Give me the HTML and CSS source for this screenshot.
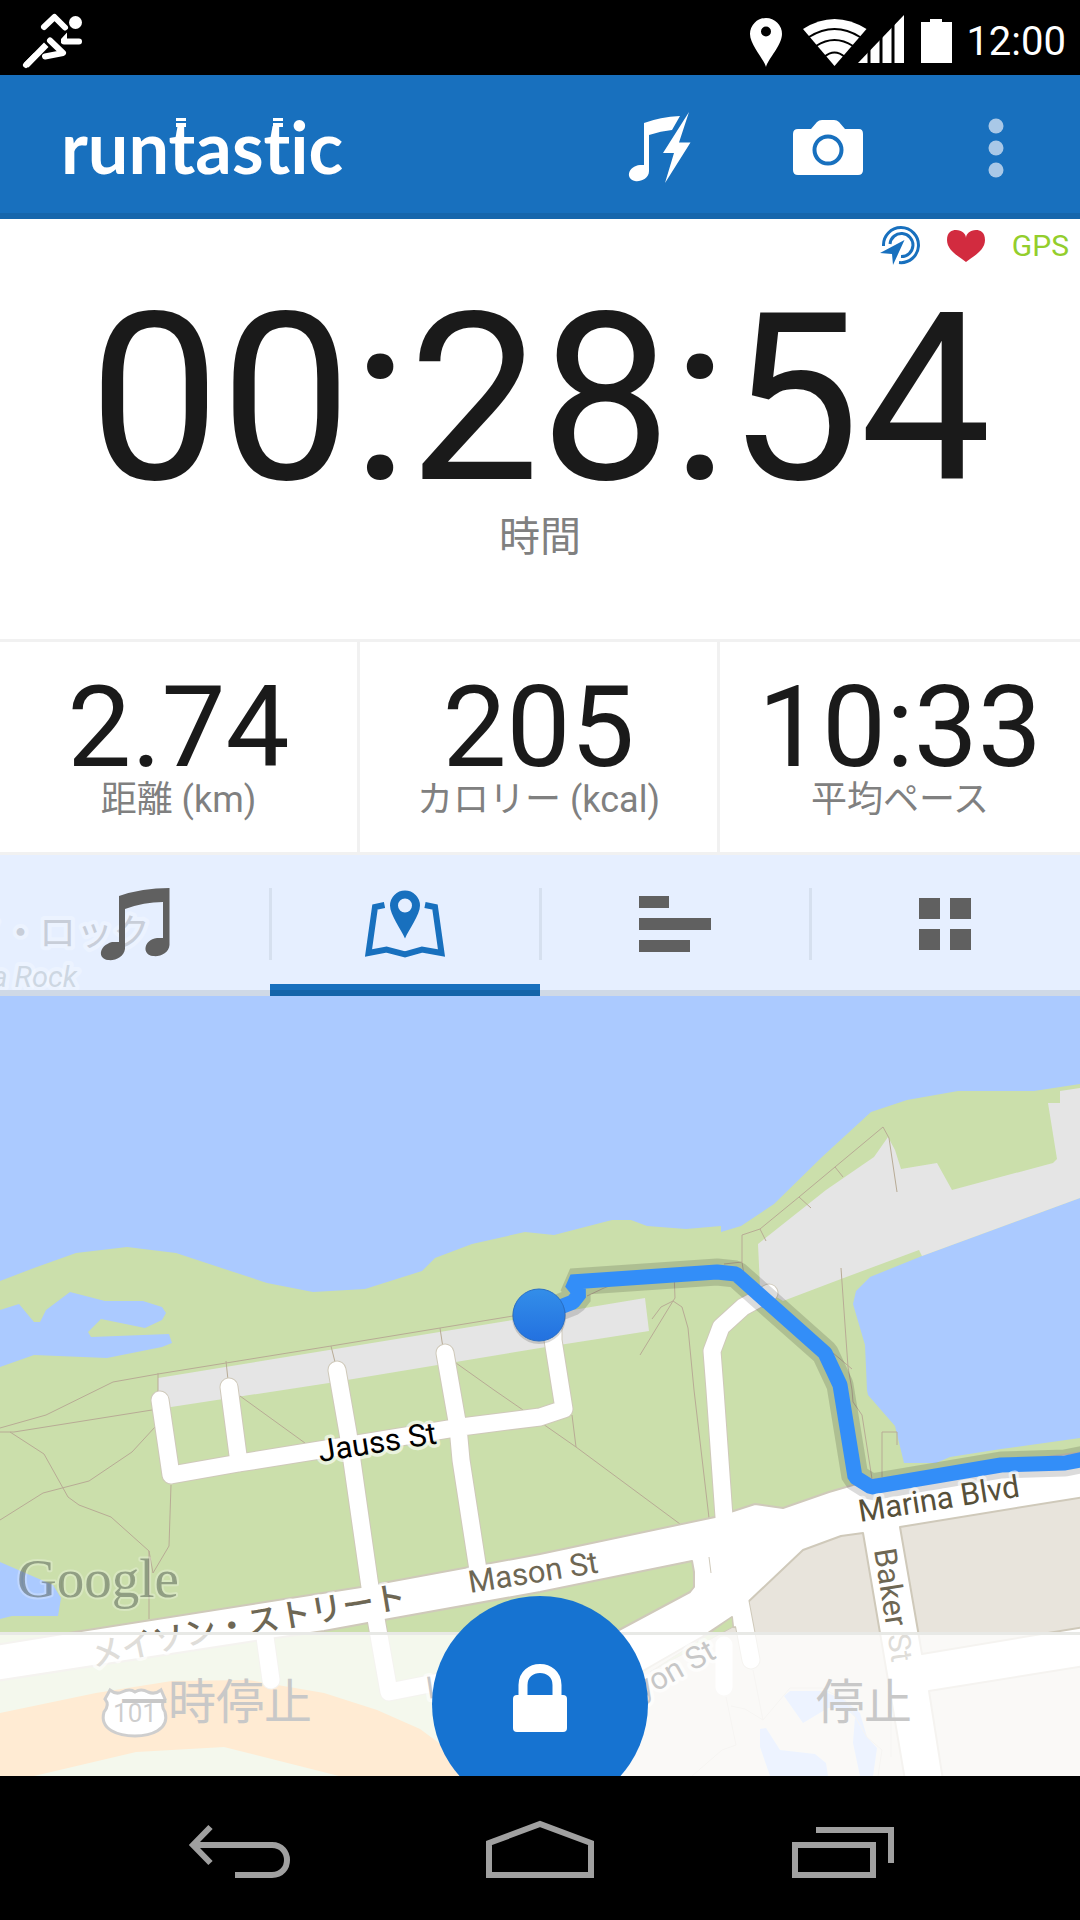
FILE: index.html
```html
<!DOCTYPE html>
<html lang="ja">
<head>
<meta charset="utf-8">
<meta name="viewport" content="width=device-width, initial-scale=1">
<title>runtastic</title>
<link rel="stylesheet" href="styles.css">
</head>
<body>
<div class="screen">
  <div class="system-bar">
    <svg class="runner" width="64" height="60" viewBox="20 12 64 60" aria-hidden="true">
      <g fill="none" stroke="#fff" stroke-width="6" stroke-linecap="round" stroke-linejoin="round">
        <path d="M44 28L54.500 18L65 28.500"/>
        <path d="M64 42.500H79"/>
        <path d="M50 41.500L63 54L45 57.500"/>
        <path d="M26 66L35 57"/>
      </g>
      <path d="M24 64L44 43.500L48.500 48L28.500 68.500ZM67 33.500L61 40V44L67 45Z" fill="#fff"/>
      <circle cx="75.500" cy="23.500" r="6.500" fill="#fff"/>
    </svg>
    <div class="system-status">
      <svg width="208" height="60" viewBox="748 10 208 60" fill="#fff" aria-hidden="true">
        <path fill-rule="evenodd" d="M766 66C764 58 750 44 750 33A16 16 0 0 1 782 33C782 44 768 58 766 66ZM766 25.500A5 5 0 1 0 766 35.500A5 5 0 1 0 766 25.500Z"/>
        <path d="M803 28Q834.500 8 866.500 28L834.500 65Z"/>
        <path d="M809 36Q834.500 20 860 36M816 45Q834.500 33 853 45M824 56Q834.500 47 845 56" fill="none" stroke="#000" stroke-width="2"/>
        <path d="M858 62L904 14V62Z"/>
        <path d="M869 30V63M881 25V63M893 15V63" stroke="#000" stroke-width="3"/>
        <path d="M921 62V21H930V18H942V21H952V62Z"/>
      </svg>
      <time class="clock">12:00</time>
    </div>
  </div>

  <header class="app-bar">
    <a class="brand" href="#" aria-label="runtastic">
      <svg width="300" height="90" viewBox="0 -6 300 90" aria-hidden="true">
        <text class="brand-text" x="0" y="69">runtastic</text>
        <path d="M115 13H125V16H115ZM115 18H125V22H115ZM212 13H222V16H212ZM212 18H222V22H212Z" fill="#fff"/>
      </svg>
    </a>
    <div class="app-actions">
      <button class="app-action" aria-label="パワーソング">
        <svg width="72" height="80" viewBox="625 108 72 80" fill="#fff">
          <path d="M645 123Q661 117 681 116L673 130Q662 131 650 135V171C650 179 641 182 636 181C626 179 629 166 641 165H645Z"/>
          <path d="M690 112L680 142.500H691.500L666 183L675 153H664Z"/>
        </svg>
      </button>
      <button class="app-action" aria-label="カメラ">
        <svg width="72" height="80" viewBox="792 108 72 80">
          <path d="M793 134Q793 129 798 129H811L817 122Q819 120 822 120H834Q837 120 839 122L845 129H859Q863 129 863 134V170Q863 175 858 175H798Q793 175 793 170Z" fill="#fff"/>
          <circle cx="828" cy="150" r="13.500" fill="none" stroke="#1870be" stroke-width="4"/>
        </svg>
      </button>
      <button class="app-action" aria-label="メニュー">
        <svg width="24" height="80" viewBox="984 108 24 80" fill="#a9c8e7">
          <circle cx="996" cy="126" r="7.500"/><circle cx="996" cy="148" r="7.500"/><circle cx="996" cy="170" r="7.500"/>
        </svg>
      </button>
    </div>
  </header>

  <main class="session">
    <section class="duration">
      <div class="signals">
        <svg width="40" height="40" viewBox="880 227 40 40" aria-label="ライブトラッキング">
          <g fill="none" stroke="#1870be" stroke-width="3">
            <path d="M883.500 247A17.500 17.500 0 1 1 899 263.500"/>
            <path d="M890 245A11.500 11.500 0 1 1 901 257.500"/>
          </g>
          <path d="M904.500 241L880 254L892 255L893 266Z" fill="#1870be"/>
        </svg>
        <svg width="38" height="34" viewBox="0 0 38 34" aria-label="心拍数">
          <path d="M19 33C13 28 0 22 0 11C0 3 5 1 9 1C15 1 19 5 19 9C19 5 23 1 29 1C33 1 38 3 38 11C38 22 25 28 19 33Z" fill="#d22b3f"/>
        </svg>
        <span class="gps">GPS</span>
      </div>
      <div class="timer">00:28:54</div>
      <div class="timer-label">時間</div>
    </section>
    <section class="metrics">
      <div class="metric"><div class="metric-value">2.74</div><div class="metric-label">距離 (km)</div></div>
      <div class="metric"><div class="metric-value">205</div><div class="metric-label">カロリー (kcal)</div></div>
      <div class="metric"><div class="metric-value">10:33</div><div class="metric-label">平均ペース</div></div>
    </section>

    <section class="map-panel">
      <svg class="map" viewBox="0 855 1080 921" preserveAspectRatio="xMidYMid slice" aria-label="地図">
        <defs>
          <linearGradient id="dot" x1="0" y1="0" x2="0" y2="1"><stop offset="0" stop-color="#338ee9"/><stop offset="1" stop-color="#2371e0"/></linearGradient>
          <path id="mason-jp" d="M93 1667Q170 1649 235 1637T420 1605"/>
        </defs>
        <rect y="855" width="1080" height="921" fill="#abcaff"/>
        <!-- park -->
        <path fill="#cbdfab" d="M0 1281L34 1268L76 1253L127 1247L176 1253L267 1283L313 1292L365 1289L422 1271L435 1258L472 1244L525 1232L554 1235L612 1220H631L647 1226L686 1229L721 1226V1232L741 1226L774 1204L822 1157L871 1112L907 1100L958 1091H1034L1080 1084V1198L922 1256L870 1277L856 1291L853 1304L865 1345L867 1390L868 1395L895 1426L904 1463H936L950 1457L1001 1449L1080 1438V1776H0Z"/>
        <path fill="#abcaff" d="M0 1310L19 1304L34 1322H40L46 1310L70 1292L105 1301H143L162 1307L166 1313L162 1320L145 1328L101 1319L88 1332L91 1337L169 1334L172 1343L162 1347L107 1358L34 1355L0 1367ZM0 1562L53 1585L61 1598L58 1616H12L0 1619Z"/>
        <!-- paved lots -->
        <path fill="#e5e5e5" d="M158 1378L513 1320L645 1298L649 1331L540 1348L329 1383L171 1407H158ZM758 1244L826 1190L874 1157L888 1137L895 1150L901 1169L937 1163L952 1190L1053 1163L1057 1159L1048 1103H1060V1091L1080 1088V1198L922 1256L919 1250L841 1279L783 1301L760 1287Z"/>
        <!-- footpaths -->
        <g fill="none" stroke="#b8ab95">
          <path d="M0 1428L46 1415L113 1382L158 1374L226 1363L331 1346L440 1328L513 1316M158 1373V1400M226 1361L228 1380M331 1346L335 1362M440 1328L443 1348M456 1363L494 1390L523 1410"/>
          <path d="M0 1432H14L152 1410M10 1432L44 1454L68 1497L79 1505L111 1517L149 1551V1619M149 1551L153 1573L169 1546L171 1485M0 1520L43 1493L89 1481L132 1452L155 1427M240 1396L305 1443"/>
          <path d="M543 1424L576 1447L680 1524M572 1415L576 1447M652 1319L661 1307L673 1301L640 1355M674 1272L675 1298L673 1301L682 1307L688 1328L694 1390L709 1518M587 1296L604 1288L643 1273"/>
          <path d="M724 1264L742 1262V1235L760 1229L799 1197L835 1167L883 1127L889 1138L897 1192M760 1229L766 1241M799 1197L811 1208M835 1167L843 1177M742 1262L744 1275M841 1268L848 1367L852 1390L853 1402L862 1415L872 1479M833 1353L852 1369M882 1477V1432H897V1445"/>
        </g>
        <!-- highway -->
        <path fill="#ffa236" d="M0 1713L96 1693L172 1681L248 1680L324 1693L377 1710L420 1729L439 1743L461 1776H339L224 1747L136 1752L34 1776H0Z"/>
        <!-- city blocks -->
        <path fill="#e8e4dc" d="M540 1730L643 1673L740 1600L790 1540L900 1500L1080 1480V1776H540Z"/>
        <path fill="#abcaff" d="M784 1696L790 1691H822L843 1699L860 1713L867 1737L877 1748L873 1776H860L853 1743L855 1717L845 1708H828L803 1723ZM766 1728L780 1750L815 1754L826 1763L828 1776H770L760 1747V1729Z"/>
        <g fill="none" stroke="#d5cfc4"><path d="M753 1670L763 1720L790 1688H822L845 1700L867 1737L882 1750L878 1776M726 1697L736 1745L722 1750L692 1776M731 1706L745 1709L763 1720M891 1700V1757"/></g>
        <!-- streets: casing, then surface -->
        <g fill="none" stroke-linecap="round" stroke-linejoin="round">
          <g stroke="#cfc9ba" stroke-width="19">
            <path d="M160 1400L171 1475L239 1463L351 1445L461 1427L540 1417L564 1409L553 1340V1325M229 1387L239 1463M337 1370L348 1433L370 1587L375 1613L389 1692L470 1676M445 1353L458 1427L461 1460L478 1570M769 1293L743 1307L721 1327L712 1351L715 1390L724 1517L751 1660M265 1637L271 1680"/>
          </g>
          <path fill="#fff" stroke="#cfc9ba" stroke-width="2" d="M-4 1645L75 1632L361 1587L540 1554L715 1517L755 1504L783 1508L829 1492L870 1480L1084 1452V1497L900 1527L922 1654L1084 1627V1666L929 1691L943 1780H905L863 1533L841 1536L803 1550L747 1603L753 1628L733 1627L732 1617L702 1637L540 1730V1675L619 1630L690 1592L694 1587V1572L692 1561L540 1592L384 1620L324 1631L255 1641L-4 1681Z"/>
          <g stroke="#fff" stroke-width="17">
            <path d="M160 1400L171 1475L239 1463L351 1445L461 1427L540 1417L564 1409L553 1340V1325M229 1387L239 1463M337 1370L348 1433L370 1587L375 1613L389 1692L470 1676M445 1353L458 1427L461 1460L478 1570M769 1293L743 1307L721 1327L712 1351L715 1390L724 1517L751 1660M724 1645V1687M265 1637L271 1680"/>
          </g>
        </g>
        <path d="M703 1638L732 1617L733 1627L650 1672Z" fill="#cbdfab" stroke="#cfc9ba"/>
        <path d="M709 1557L711 1573" stroke="#cfc9ba"/>
        <!-- highway shield -->
        <path d="M110 1690Q116 1695 122 1692Q130 1688 135 1692Q141 1688 148 1692Q155 1695 161 1690L165 1699Q160 1705 165 1712C170 1730 150 1736 135 1736C119 1736 99 1730 104 1712Q110 1705 105 1699Z" fill="#fff" stroke="#222" stroke-width="3"/>
        <text class="shield" x="135" y="1722">101</text>
        <!-- run track -->
        <g fill="none" stroke-linejoin="bevel">
          <path d="M540 1315L573 1302L580 1293L571 1282L717 1272L736 1274L825 1353L840 1385L855 1477L871 1487L1001 1465L1065 1463L1090 1458" stroke="#000" stroke-opacity=".14" stroke-width="27"/>
          <path d="M540 1315L573 1302L580 1293L571 1282L717 1272L736 1274L825 1353L840 1385L855 1477L871 1487L1001 1465L1065 1463L1090 1458" stroke="#338ef8" stroke-width="15"/>
        </g>
        <!-- street names -->
        <text class="place" x="150" y="946">アニタ・ロック</text>
        <text class="place place-latin" x="77" y="987">Anita Rock</text>
        <text class="street street-dark" transform="translate(320 1462) rotate(-9)">Jauss St</text>
        <text class="street" transform="translate(470 1593) rotate(-9)">Mason St</text>
        <text class="street street-jp"><textPath href="#mason-jp">メイソン・ストリート</textPath></text>
        <text class="street street-marina" transform="translate(860 1522) rotate(-9)">Marina Blvd</text>
        <text class="street" transform="translate(874 1550) rotate(81)">Baker St</text>
        <text class="street street-dark" transform="translate(630 1706) rotate(-29)">Lyon St</text>
        <text class="street street-dark" transform="translate(428 1699) rotate(-9)">L</text>
        <text class="google" x="17" y="1597">Google</text>
        <!-- current position -->
        <circle cx="539" cy="1317" r="27" fill="#000" opacity=".15"/>
        <circle cx="539" cy="1315" r="26" fill="url(#dot)" stroke="#2a6fc4" stroke-width="1"/>
      </svg>

      <nav class="tabs">
        <button class="tab" aria-label="音楽">
          <svg width="80" height="80" viewBox="95 884 80 80" fill="#606060">
            <path d="M119 896Q142 888 169.500 888V945C169 953 160 957 153 956C142 955 143 940 157 938H163V902Q144 902 125 909V949C124 957 115 961 108 960C98 959 98 946 112 942H119Z"/>
          </svg>
        </button>
        <button class="tab tab-active" aria-label="地図" aria-current="page">
          <svg width="84" height="80" viewBox="363 884 84 80">
            <path d="M384.500 905L375 907L368.500 953L386.500 949.500L405 954.500L422 949.500L441.500 953L435 907L425 905" fill="none" stroke="#1870be" stroke-width="6"/>
            <path fill="#1870be" fill-rule="evenodd" d="M405 938.500C401 929 390 915 390 905.500A15 15 0 0 1 420 905.500C420 915 409 929 405 938.500ZM405 898.500A7 7 0 1 0 405 912.500A7 7 0 1 0 405 898.500Z"/>
          </svg>
        </button>
        <button class="tab" aria-label="詳細">
          <svg width="72" height="80" viewBox="0 0 72 80" fill="#606060"><path d="M0 12H30V24H0ZM0 34H72V46H0ZM0 56H51V68H0Z"/></svg>
        </button>
        <button class="tab" aria-label="グリッド">
          <svg width="52" height="80" viewBox="0 0 52 80" fill="#606060"><path d="M0 14H21V35H0ZM31 14H52V35H31ZM0 45H21V66H0ZM31 45H52V66H31Z"/></svg>
        </button>
      </nav>

      <div class="controls">
        <button class="control">一時停止</button>
        <button class="lock" aria-label="ロック">
          <svg width="56" height="70" viewBox="0 0 56 70">
            <path d="M11 36V21C11 -1 45 -1 45 21V36" fill="none" stroke="#fff" stroke-width="9"/>
            <rect x="1" y="31" width="54" height="37" rx="4" fill="#fff"/>
          </svg>
        </button>
        <button class="control">停止</button>
      </div>
    </section>
  </main>

  <nav class="nav-bar">
    <button class="nav-key" aria-label="戻る">
      <svg width="104" height="64" viewBox="188 1818 104 64" fill="none" stroke="#a0a0a0" stroke-width="6">
        <path d="M210.500 1827L193 1845L210.500 1863M193 1845H272C292 1845 292 1875 272 1875H235"/>
      </svg>
    </button>
    <button class="nav-key" aria-label="ホーム">
      <svg width="112" height="64" viewBox="484 1818 112 64" fill="none" stroke="#a0a0a0" stroke-width="6">
        <path d="M489 1843L540 1824L591 1843V1875H489Z"/>
      </svg>
    </button>
    <button class="nav-key" aria-label="履歴">
      <svg width="110" height="64" viewBox="785 1818 110 64" fill="none" stroke="#a0a0a0" stroke-width="6">
        <path d="M795 1845H873V1875H795ZM816 1830H891V1863"/>
      </svg>
    </button>
  </nav>
</div>
</body>
</html>
```
FILE: styles.css
```css
* { box-sizing: border-box; }

body {
  margin: 0;
  background: #000;
  font-family: Roboto, "Noto Sans CJK JP", sans-serif;
}

button {
  margin: 0;
  padding: 0;
  border: 0;
  background: none;
  font: inherit;
  color: inherit;
}

svg { display: block; }

.screen {
  display: flex;
  flex-direction: column;
  min-height: 100vh;
}

/* System status bar */
.system-bar {
  display: flex;
  align-items: center;
  justify-content: space-between;
  height: 75px;
  padding: 6px 14px 0 20px;
  background: #000;
  color: #fff;
}

.system-status {
  display: flex;
  align-items: center;
  gap: 10px;
}

.clock {
  font-size: 40px;
  line-height: 60px;
  padding-top: 2px;
}

/* App bar */
.app-bar {
  display: flex;
  align-items: center;
  justify-content: space-between;
  height: 144px;
  padding-left: 61px;
  background: #1870be;
  border-bottom: 6px solid #1666ac;
}

.brand-text {
  font-family: Lato, sans-serif;
  font-size: 72px;
  font-weight: 700;
  font-variant-ligatures: none;
  fill: #fff;
}

.app-actions { display: flex; }

.app-action {
  display: grid;
  place-items: center;
  width: 168px;
  height: 138px;
  padding-top: 8px;
}

/* Session */
.session {
  display: flex;
  flex: 1;
  flex-direction: column;
  background: #fff;
}

.duration {
  height: 423px;
  border-bottom: 3px solid #f1f1f1;
  text-align: center;
}

.signals {
  display: flex;
  align-items: center;
  justify-content: flex-end;
  gap: 27px;
  height: 54px;
  margin-bottom: 12px;
  padding-right: 11px;
}

.gps {
  font-size: 30px;
  line-height: 54px;
  color: #93ce2c;
}

.timer {
  font-size: 234px;
  line-height: 228px;
  color: #1a1a1a;
}

.timer-label {
  font-size: 41px;
  line-height: 48px;
  color: #808080;
}

.metrics {
  display: grid;
  grid-template-columns: repeat(3, 1fr);
  border-bottom: 3px solid #f1f1f1;
}

.metric {
  height: 210px;
  padding-top: 33px;
  text-align: center;
}

.metric:not(:last-child) { border-right: 3px solid #f1f1f1; }

.metric-value {
  font-size: 114px;
  line-height: 105px;
  color: #1a1a1a;
}

.metric-label {
  font-size: 36px;
  line-height: 40px;
  color: #808080;
}

/* Map with its overlays */
.map-panel {
  position: relative;
  display: flex;
  flex: 1;
  flex-direction: column;
  justify-content: space-between;
  min-height: 600px;
  overflow: hidden;
}

.map {
  position: absolute;
  inset: 0;
  width: 100%;
  height: 100%;
}

.map text {
  paint-order: stroke;
  stroke-linejoin: round;
}

.street {
  font-size: 31px;
  fill: #6e6754;
  stroke: rgba(255, 255, 255, .6);
  stroke-width: 7px;
}

.street-dark { fill: #000; }
.street-marina { fill: #575039; }

.street-jp {
  font-size: 32px;
  font-weight: 500;
}

.place {
  font-size: 37px;
  text-anchor: end;
  fill: #485c80;
  stroke: rgba(255, 255, 255, .25);
  stroke-width: 8px;
}

.place-latin {
  font-size: 29px;
  font-style: italic;
  fill: #58799e;
}

.shield {
  font-size: 26px;
  text-anchor: middle;
  fill: #222;
}

.google {
  font-family: "Liberation Serif", serif;
  font-size: 55px;
  fill: rgba(60, 70, 60, .45);
  stroke: rgba(255, 255, 255, .25);
  stroke-width: 4px;
}

.tabs {
  position: relative;
  display: grid;
  grid-template-columns: repeat(4, 1fr);
  height: 141px;
  background: rgba(255, 255, 255, .7);
  border-bottom: 6px solid #cfd9e6;
}

.tab {
  position: relative;
  display: grid;
  place-items: center;
  height: 141px;
  padding-bottom: 3px;
}

.tab + .tab::before {
  content: "";
  position: absolute;
  left: -1px;
  top: 33px;
  width: 3px;
  height: 72px;
  background: #d6e0ef;
}

.tab-active::after {
  content: "";
  position: absolute;
  inset: auto 0 0;
  height: 12px;
  background: linear-gradient(#1870be 50%, #1464a9 50%);
}

.controls {
  position: relative;
  display: grid;
  grid-template-columns: 1fr 216px 1fr;
  align-items: start;
  height: 144px;
  border-top: 3px solid #e8e9e6;
  background: rgba(255, 255, 255, .78);
  background-clip: padding-box;
}

.control {
  height: 136px;
  font-size: 48px;
  line-height: 72px;
  color: #c8c8c8;
}

.lock {
  display: grid;
  place-items: center;
  width: 216px;
  height: 216px;
  margin-top: -39px;
  padding-bottom: 10px;
  border-radius: 50%;
  background: #1673d1;
}

/* System navigation */
.nav-bar {
  display: grid;
  grid-template-columns: repeat(3, 1fr);
  height: 144px;
  padding: 0 90px;
  background: #000;
}

.nav-key {
  display: grid;
  place-items: center;
  padding-top: 4px;
}
```
